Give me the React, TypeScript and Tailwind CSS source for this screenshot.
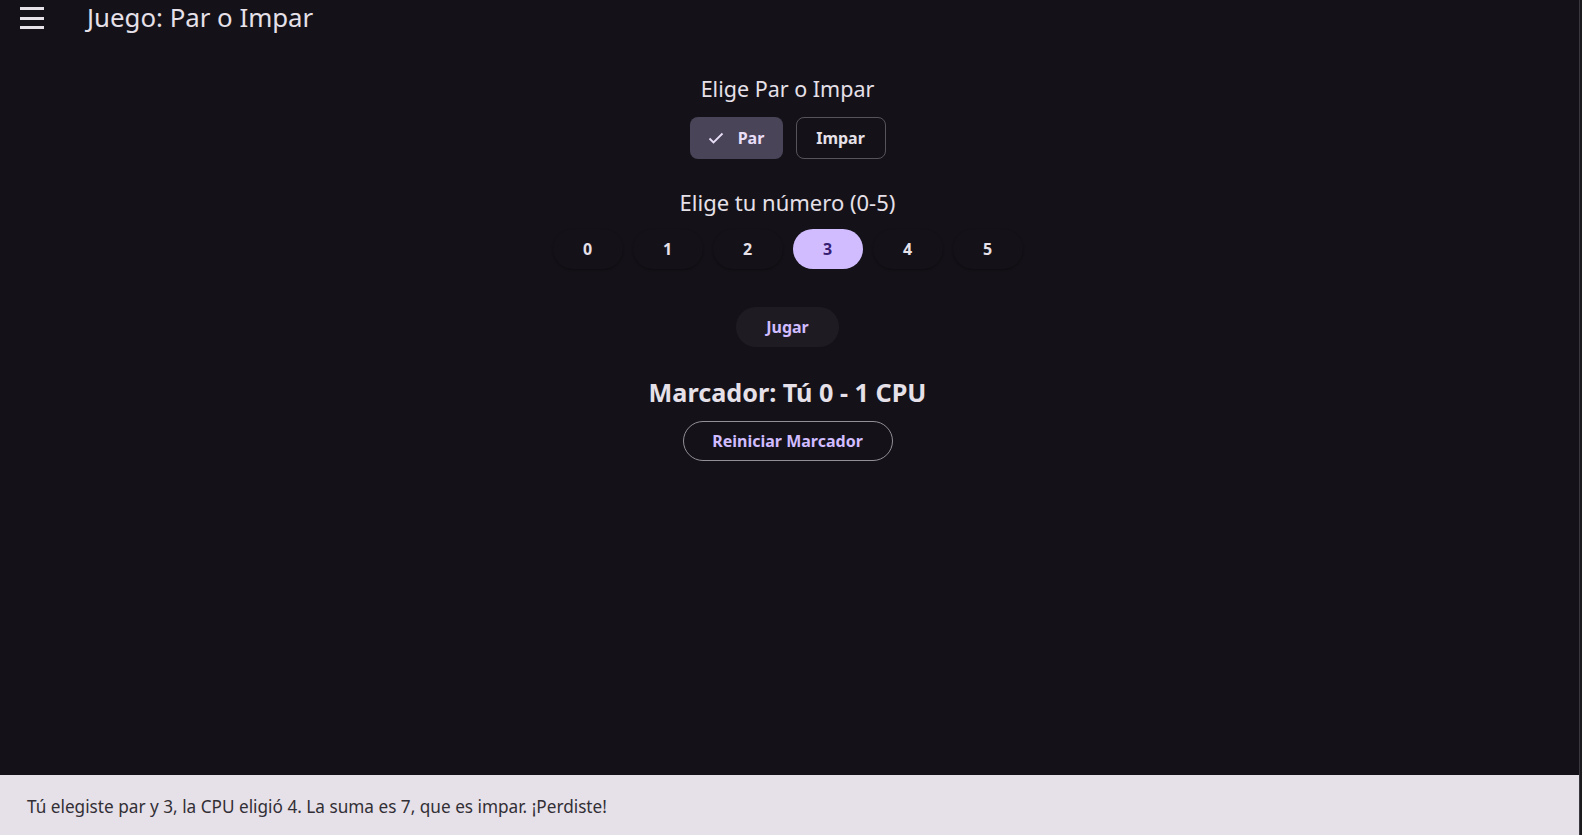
import { useState } from "react";

const numbers = [0, 1, 2, 3, 4, 5];

export default function App() {
  const [parity, setParity] = useState<"par" | "impar">("par");
  const [picked, setPicked] = useState(3);

  return (
    <div className="flex h-[835px] w-[1582px] overflow-hidden bg-[#141218] font-['Noto_Sans',sans-serif]">
      <div className="relative flex w-[1579px] flex-col">
        <header className="flex h-[36px] items-center">
          <button className="ml-5 flex h-[24px] w-[24px] flex-col justify-between py-[1px]">
            <span className="h-[3px] w-[24px] bg-[#e6e0e9]" />
            <span className="h-[3px] w-[24px] bg-[#e6e0e9]" />
            <span className="h-[3px] w-[24px] bg-[#e6e0e9]" />
          </button>
          <h1 className="ml-[43px] text-[25.8px] leading-none text-[#e6e0e9]">Juego: Par o Impar</h1>
        </header>

        <main className="flex flex-1 flex-col items-center pr-[4px]">
          <p className="mt-[40px] text-[21.5px] leading-[26px] text-[#e6e0e9]">Elige Par o Impar</p>
          <div className="mt-[15px] flex gap-[13px]">
            <button
              onClick={() => setParity("par")}
              className={`flex h-[42px] w-[93px] items-center justify-center gap-[14px] rounded-lg text-[16px] font-bold ${
                parity === "par" ? "bg-[#4a4458] text-[#e8def8]" : "border border-[#57535d] text-[#e6e0e9]"
              }`}
            >
              {parity === "par" && (
                <svg width="16" height="12" viewBox="0 0 16 12" fill="none">
                  <path d="M1.5 6.5 L5.5 10.5 L14.5 1.5" stroke="#e8def8" strokeWidth="1.8" />
                </svg>
              )}
              Par
            </button>
            <button
              onClick={() => setParity("impar")}
              className={`flex h-[42px] w-[90px] items-center justify-center gap-[14px] rounded-lg text-[16px] font-bold ${
                parity === "impar" ? "bg-[#4a4458] text-[#e8def8]" : "border border-[#57535d] text-[#e6e0e9]"
              }`}
            >
              {parity === "impar" && (
                <svg width="16" height="12" viewBox="0 0 16 12" fill="none">
                  <path d="M1.5 6.5 L5.5 10.5 L14.5 1.5" stroke="#e8def8" strokeWidth="1.8" />
                </svg>
              )}
              Impar
            </button>
          </div>

          <p className="mt-[30px] text-[22px] leading-[26px] text-[#e6e0e9]">Elige tu número (0-5)</p>
          <div className="mt-[14px] flex gap-[10px]">
            {numbers.map((n) => (
              <button
                key={n}
                onClick={() => setPicked(n)}
                className={`flex h-[40px] w-[70px] items-center justify-center rounded-full text-[16px] font-bold ${
                  picked === n
                    ? "bg-[#d0bcff] text-[#381e72]"
                    : "bg-[#141218] text-[#e6e0e9] shadow-[0_1px_2px_rgba(0,0,0,0.35)]"
                }`}
              >
                {n}
              </button>
            ))}
          </div>

          <button className="mt-[38px] flex h-[40px] w-[103px] items-center justify-center rounded-full bg-[#1e1c22] text-[16px] font-bold text-[#d0bcff]">
            Jugar
          </button>

          <p className="mt-[29px] text-[25.2px] font-bold leading-[32px] text-[#e6e0e9]">Marcador: Tú 0 - 1 CPU</p>
          <button className="mt-[13px] flex h-[40px] w-[210px] items-center justify-center rounded-full border border-[#938f99] text-[16px] font-bold text-[#d0bcff]">
            Reiniciar Marcador
          </button>
        </main>

        <div className="flex h-[60px] items-center bg-[#e6e0e9] pl-[27px] pt-[3px]">
          <p className="text-[17.2px] text-[#322f35]">
            Tú elegiste par y 3, la CPU eligió 4. La suma es 7, que es impar. ¡Perdiste!
          </p>
        </div>
      </div>
      <div className="w-[3px] border-l border-[#3a383e] bg-[#1b1a1f]" />
    </div>
  );
}
